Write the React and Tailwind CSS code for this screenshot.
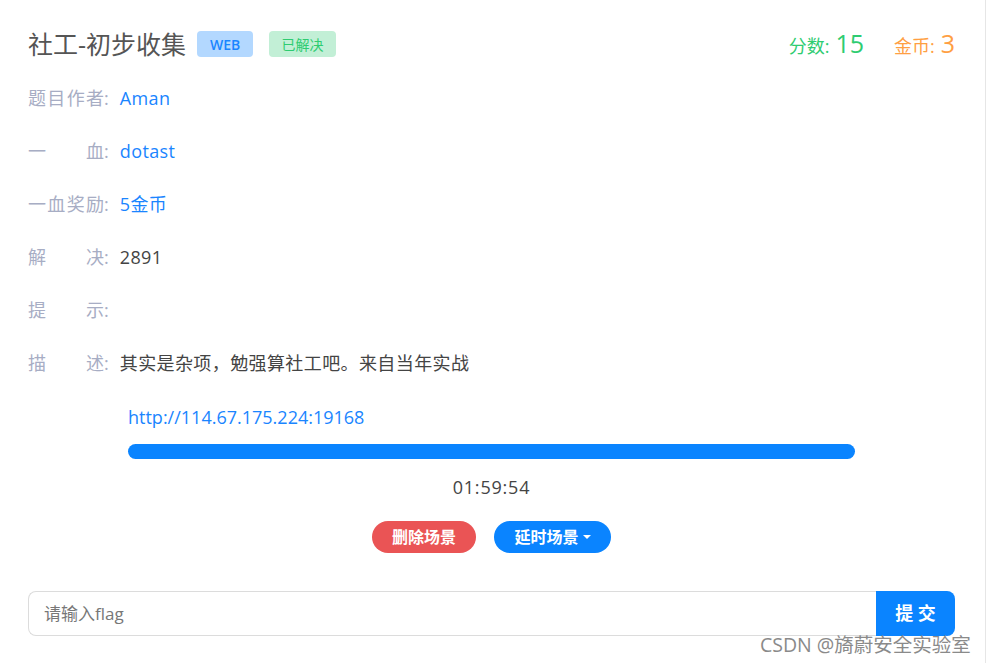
const rows = [
  { label: '题目作者', value: 'Aman', tone: 'link' },
  { label: '一血', value: 'dotast', tone: 'link' },
  { label: '一血奖励', value: '5金币', tone: 'link' },
  { label: '解决', value: '2891', tone: 'text' },
  { label: '提示', value: '', tone: 'text' },
  { label: '描述', value: '其实是杂项，勉强算社工吧。来自当年实战', tone: 'text' },
]

const InfoRow = ({ label, value, tone }) => (
  <div className="flex items-center h-[53px] text-[18px]">
    <span className="w-[76px] text-[#a7adc4] [text-align-last:justify]">{label}</span>
    <span className="text-[#a7adc4]">:</span>
    <span className={'ml-[11px] tracking-[0.4px] ' + (tone === 'link' ? 'text-[#1a85ff]' : 'text-[#444]')}>{value}</span>
  </div>
)

const App = () => {
  return (
    <div className="relative w-[986px] h-[663px] bg-white border-r border-[#e6e6e6] overflow-hidden font-['Open_Sans','Noto_Sans_CJK_SC',sans-serif]">
      <div className="pl-[28px] pr-[30px] pt-[27px]">
        {/* header */}
        <div className="flex items-center justify-between h-[34px]">
          <div className="flex items-center">
            <h1 className="text-[25px] text-[#555] leading-[34px]">社工-初步收集</h1>
            <span className="ml-[11px] w-[56px] h-[26px] flex items-center justify-center rounded-[4px] bg-[#b3d8ff] text-[#1a85ff] text-[14px] font-semibold">WEB</span>
            <span className="ml-[16px] w-[67px] h-[26px] flex items-center justify-center rounded-[4px] bg-[#c2efd6] text-[#2ecc71] text-[14px]">已解决</span>
          </div>
          <div className="flex items-baseline">
            <span className="text-[18px] text-[#2ecc71]">分数:</span>
            <span className="ml-[6px] text-[25px] text-[#2ecc71]">15</span>
            <span className="ml-[30px] text-[18px] text-[#ff9f43]">金币:</span>
            <span className="ml-[6px] text-[25px] text-[#ff9f43]">3</span>
          </div>
        </div>

        {/* info rows */}
        <div className="mt-[11px]">
          {rows.map((r) => (
            <InfoRow key={r.label} {...r} />
          ))}
        </div>

        {/* scene */}
        <div className="px-[100px]">
          <div className="mt-[13px] h-[28px] flex items-center text-[18px] text-[#1a85ff]">http://114.67.175.224:19168</div>
          <div className="mt-[13px] h-[15px] rounded-full bg-[#0a84ff]" />
          <div className="mt-[16px] h-[24px] flex items-center justify-center text-[18px] tracking-[0.8px] text-[#444]">01:59:54</div>
        </div>

        <div className="mt-[22px] flex justify-center gap-[18px]">
          <button className="w-[104px] h-[32px] rounded-full bg-[#ea5455] text-white text-[16px] font-bold">删除场景</button>
          <button className="w-[117px] h-[32px] rounded-full bg-[#0a84ff] text-white text-[16px] font-bold flex items-center justify-center">
            延时场景
            <span className="ml-[4px] w-0 h-0 border-l-[4px] border-r-[4px] border-t-[4px] border-l-transparent border-r-transparent border-t-white" />
          </button>
        </div>

        {/* flag */}
        <div className="mt-[38px] flex h-[45px]">
          <input
            className="flex-1 h-full border border-[#dcdcdc] border-r-0 rounded-l-[8px] pl-[15px] text-[17px] text-[#444] placeholder:text-[#777] outline-none"
            placeholder="请输入flag"
          />
          <button className="w-[79px] h-full rounded-r-[8px] bg-[#0a84ff] text-white text-[18px] font-bold">提 交</button>
        </div>
      </div>

      <div className="absolute left-[760px] top-[632px] text-[19.5px] leading-[26px] text-[#8a8a8a] whitespace-nowrap">CSDN @旖蔚安全实验室</div>
    </div>
  )
}

export default App
